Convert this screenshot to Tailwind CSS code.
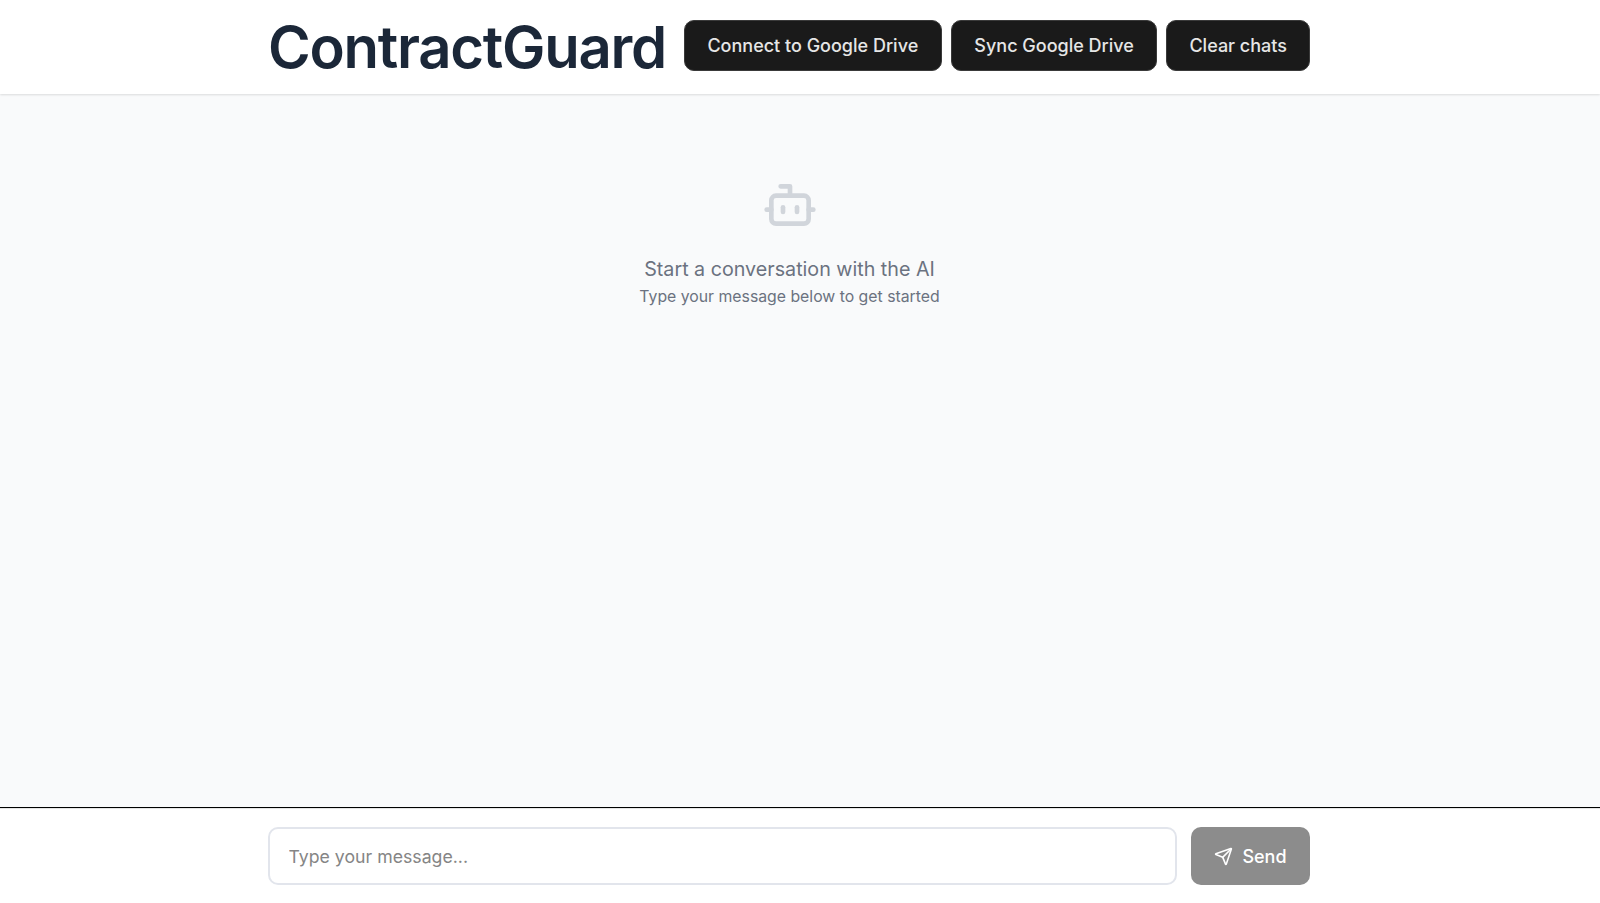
<!doctype html>
<html>
<head>
<meta charset="utf-8">
<script src="https://cdn.jsdelivr.net/npm/@tailwindcss/browser@4"></script>
</head>
<body class="bg-white font-['Inter',sans-serif]">
<div class="h-[903px] w-full flex flex-col overflow-hidden">
  <header class="h-[94px] shrink-0 bg-white shadow-[0_1px_2px_rgba(0,0,0,0.12)] relative z-10">
    <div class="w-[1042px] ml-[268px] h-[91px] flex items-center justify-between">
      <h1 class="text-[58px] leading-none font-semibold text-[#1b2738] tracking-[-1.25px] pt-[2px]">ContractGuard</h1>
      <div class="flex gap-[9.6px]">
        <button class="h-[51.5px] w-[258px] rounded-[10px] bg-[#1a1a1a] border border-[#3a3a3a] text-[#e6e6e6] text-[18px] font-medium">Connect to Google Drive</button>
        <button class="h-[51.5px] w-[205.4px] rounded-[10px] bg-[#1a1a1a] border border-[#3a3a3a] text-[#e6e6e6] text-[18px] font-medium">Sync Google Drive</button>
        <button class="h-[51.5px] w-[143.6px] rounded-[10px] bg-[#1a1a1a] border border-[#3a3a3a] text-[#e6e6e6] text-[18px] font-medium">Clear chats</button>
      </div>
    </div>
  </header>
  <main class="flex-1 bg-[#f9fafb] flex flex-col items-center pt-[82.5px] pr-[21px]">
    <svg class="w-[56px] h-[56px] text-[#d1d5db]" viewBox="0 0 24 24" fill="none" stroke="currentColor" stroke-width="2" stroke-linecap="round" stroke-linejoin="round">
      <path d="M12 8V4H8"/><rect width="16" height="12" x="4" y="8" rx="2"/><path d="M2 14h2"/><path d="M20 14h2"/><path d="M15 13v2"/><path d="M9 13v2"/>
    </svg>
    <p class="mt-[22px] text-[19.7px] leading-[28px] text-[#6b7280]">Start a conversation with the AI</p>
    <p class="text-[15.8px] leading-[24px] text-[#6b7280] mt-[2.5px]">Type your message below to get started</p>
  </main>
  <footer class="h-[96px] shrink-0 bg-white border-t border-black shadow-[inset_0_1px_0_rgba(0,0,0,0.1)]">
    <div class="w-[1042px] ml-[268px] mt-[19px] flex gap-[13.6px]">
      <input class="flex-1 h-[58px] rounded-[10px] border-2 border-[#e2e5ec] px-[18.5px] text-[17.7px] bg-white placeholder:text-[#858585] outline-none" placeholder="Type your message...">
      <button class="w-[119px] h-[58px] rounded-[10px] bg-[#8c8c8c] text-white text-[18px] font-medium flex items-center justify-center gap-[9px]">
        <svg class="w-[19px] h-[19px]" viewBox="0 0 24 24" fill="none" stroke="currentColor" stroke-width="2" stroke-linecap="round" stroke-linejoin="round"><path d="M14.536 21.686a.5.5 0 0 0 .937-.024l6.5-19a.496.496 0 0 0-.635-.635l-19 6.5a.5.5 0 0 0-.024.937l7.93 3.18a2 2 0 0 1 1.112 1.11z"/><path d="m21.854 2.147-10.94 10.939"/></svg>
        Send
      </button>
    </div>
  </footer>
</div>
</body>
</html>
